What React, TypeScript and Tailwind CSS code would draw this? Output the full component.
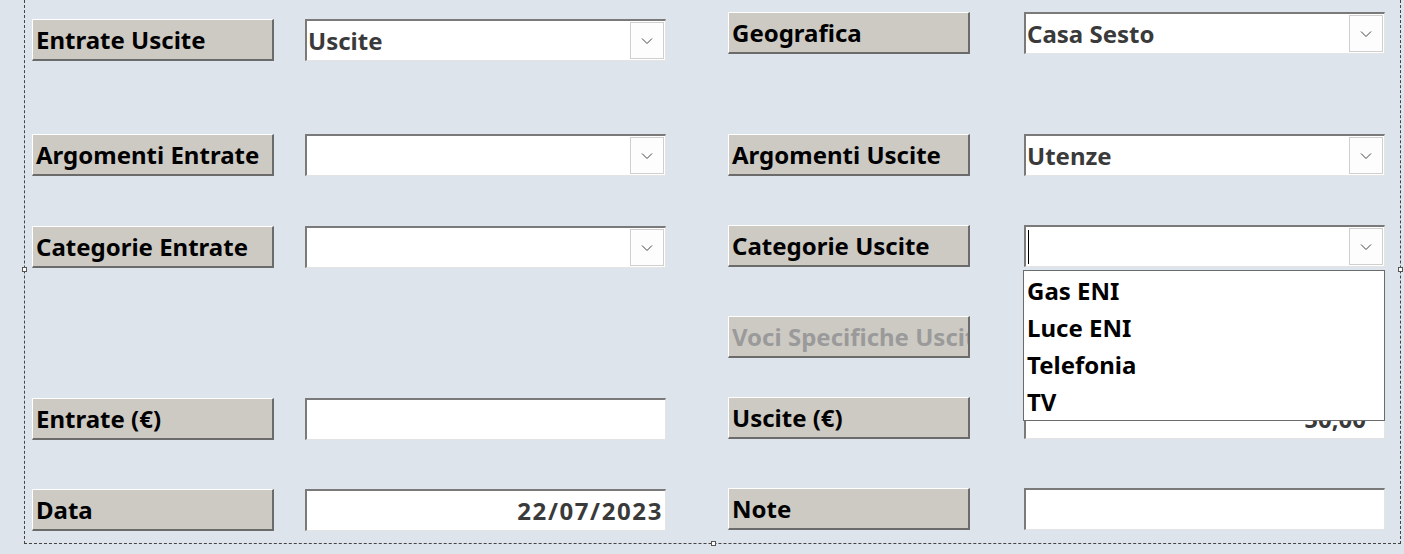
const font = { fontFamily: '"Noto Sans", "Open Sans", sans-serif' }

const Label = ({ text, disabled, className = '' }: { text: string; disabled?: boolean; className?: string }) => (
  <div
    className={`w-[242px] h-[42px] shrink-0 flex items-center pl-[3px] overflow-hidden whitespace-nowrap bg-[#cdcac4] border-t border-l border-t-white border-l-white border-r-2 border-b-2 border-r-[#6b6b6b] border-b-[#6b6b6b] text-[24px] font-bold ${disabled ? 'text-[#9a9a9a]' : 'text-black'} ${className}`}
  >
    {text}
  </div>
)

const Chevron = () => (
  <svg width="12" height="8" viewBox="0 0 12 8" fill="none">
    <path d="M1 1.5 L6 6.5 L11 1.5" stroke="#444" strokeWidth="1" />
  </svg>
)

const Combo = ({ value, caret }: { value?: string; caret?: boolean }) => (
  <div className="w-[361px] h-[42px] shrink-0 flex items-center bg-white border-t-2 border-l-2 border-t-[#7a7a7a] border-l-[#7a7a7a] border-r border-b border-r-[#e4e4e4] border-b-[#e4e4e4]">
    <div className="flex-1 pl-[1px] text-[24px] font-bold text-[#3a3a3a] whitespace-nowrap flex items-center h-full">
      {caret && <span className="inline-block w-[1px] h-[34px] bg-black ml-[1px]" />}
      {value}
    </div>
    <div className="w-[34px] h-[37px] mr-[1px] flex items-center justify-center bg-[#fdfdfd] border border-[#cfcfcf]">
      <Chevron />
    </div>
  </div>
)

const TextBox = ({ value, clipped }: { value?: string; clipped?: boolean }) => (
  <div className="w-[361px] h-[42px] shrink-0 flex items-center justify-end pr-[2px] overflow-hidden bg-white border-t-2 border-l-2 border-t-[#7a7a7a] border-l-[#7a7a7a] border-r border-b border-r-[#e4e4e4] border-b-[#e4e4e4] text-[24px] font-bold text-[#3a3a3a] whitespace-nowrap">
    <span className={clipped ? 'pr-[16px]' : 'tracking-[1.6px]'}>{value}</span>
  </div>
)

const Handle = ({ className }: { className: string }) => (
  <div className={`absolute w-[5px] h-[5px] bg-white border border-[#555] ${className}`} />
)

export default function App() {
  return (
    <div className="w-[1404px] h-[554px] bg-[#dee4ec] overflow-hidden" style={font}>
      <div className="relative ml-[24px] w-[1377px] h-[544px] border-l border-r border-b border-dashed border-[#444]">
        <div className="flex pl-[7px]">
          {/* left column */}
          <div className="flex flex-col w-[634px]">
            <div className="flex gap-[31px] mt-[19px]">
              <Label text="Entrate Uscite" />
              <Combo value="Uscite" />
            </div>
            <div className="flex gap-[31px] mt-[73px]">
              <Label text="Argomenti Entrate" />
              <Combo />
            </div>
            <div className="flex gap-[31px] mt-[50px]">
              <Label text="Categorie Entrate" />
              <Combo />
            </div>
            <div className="flex gap-[31px] mt-[130px]">
              <Label text="Entrate (€)" />
              <TextBox />
            </div>
            <div className="flex gap-[31px] mt-[49px]">
              <Label text="Data" />
              <TextBox value="22/07/2023" />
            </div>
          </div>

          {/* right column */}
          <div className="flex flex-col ml-[62px]">
            <div className="flex gap-[54px] mt-[12px]">
              <Label text="Geografica" />
              <Combo value="Casa Sesto" />
            </div>
            <div className="flex gap-[54px] mt-[80px]">
              <Label text="Argomenti Uscite" />
              <Combo value="Utenze" />
            </div>
            <div className="relative flex gap-[54px] mt-[49px]">
              <Label text="Categorie Uscite" />
              <Combo caret />
              <div className="absolute left-[295px] top-[45px] w-[362px] h-[151px] z-10 bg-white border border-[#6b6b6b] pl-[3px] pt-[1px] text-[24px] font-bold text-black leading-[37px]">
                <div>Gas ENI</div>
                <div>Luce ENI</div>
                <div>Telefonia</div>
                <div>TV</div>
              </div>
            </div>
            <div className="flex mt-[49px]">
              <Label text="Voci Specifiche Uscite" disabled />
            </div>
            <div className="flex gap-[54px] mt-[39px]">
              <Label text="Uscite (€)" />
              <TextBox value="50,00" clipped />
            </div>
            <div className="flex gap-[54px] mt-[49px]">
              <Label text="Note" />
              <TextBox />
            </div>
          </div>
        </div>

        <Handle className="left-[-3px] top-[267px]" />
        <Handle className="right-[-3px] top-[267px]" />
        <Handle className="left-[686px] bottom-[-3px]" />
      </div>
    </div>
  )
}
